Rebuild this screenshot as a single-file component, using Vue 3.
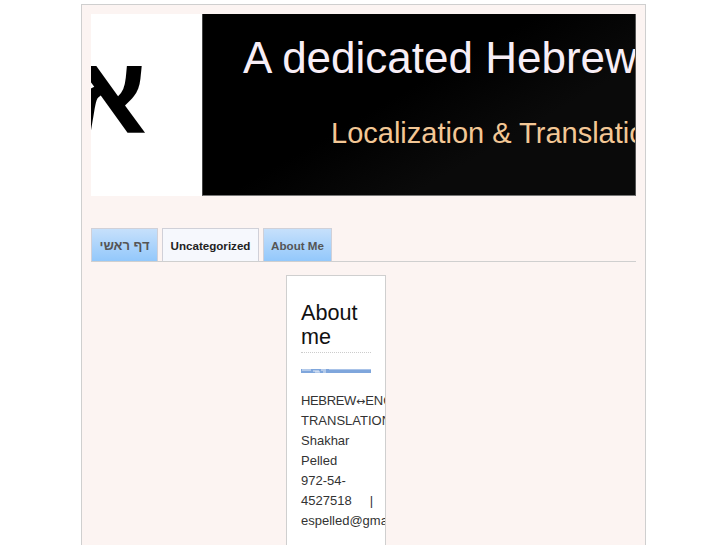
<template>
  <div class="wrap">
    <div class="banner">
      <div class="logo"><span class="alef">א</span></div>
      <div class="dark">
        <div class="head">A dedicated Hebrew Translator</div>
        <div class="sub">Localization &amp; Translation Services</div>
      </div>
    </div>
    <nav class="tabs">
      <a class="tab home" dir="rtl">דף ראשי</a>
      <a class="tab current">Uncategorized</a>
      <a class="tab about">About Me</a>
    </nav>
    <div class="content">
      <aside class="card">
        <h2>About me</h2>
        <svg class="strip" width="70" height="4" viewBox="0 0 70 4">
          <rect width="70" height="4" fill="#7fa6dc" />
          <path d="M1 1h9M12 2h6M20 1h5M14 3h5M22 3h3" stroke="#e8eef8" stroke-width="1" />
          <rect x="28" width="42" height="1" fill="#a9c3e8" />
        </svg>
        <p><span class="tight">HEBREW</span><span class="arrow">↔</span>ENGLISH</p>
        <p>TRANSLATIONS</p>
        <p>Shakhar</p>
        <p>Pelled</p>
        <p>972-54-</p>
        <p>4527518 &nbsp;&nbsp;&nbsp; |</p>
        <p>espelled@gmail.com</p>
      </aside>
    </div>
  </div>
</template>

<script setup>
</script>

<style>
html, body { margin: 0; background: #fff; overflow: hidden; }
</style>

<style scoped>
.wrap {
  box-sizing: border-box;
  width: 565px;
  height: 700px;
  margin: 4px auto 0;
  padding: 9px;
  background: #fcf4f2;
  border: 1px solid #cfcfcf;
  font-family: "Liberation Sans", Arial, sans-serif;
}
.banner {
  display: flex;
  width: 545px;
  height: 182px;
  overflow: hidden;
}
.logo {
  width: 111px;
  background: #fff;
  overflow: hidden;
  position: relative;
}
.alef {
  position: absolute;
  left: -19px;
  top: 26px;
  font: bold 110px/1 "Liberation Sans", "DejaVu Sans", sans-serif;
  color: #000;
}
.dark {
  flex: 1;
  min-width: 0;
  box-sizing: border-box;
  background: linear-gradient(150deg, #000 45%, #0a0a0a 70%);
  border-left: 1px solid #444;
  border-right: 1px solid #555;
  border-bottom: 1px solid #777;
  overflow: hidden;
  white-space: nowrap;
}
.head {
  margin: 19px 0 0 40px;
  font-size: 44px;
  line-height: 50px;
  color: #f8eef6;
}
.sub {
  margin: 34px 0 0 128px;
  font-size: 29px;
  line-height: 33px;
  color: #f3c795;
}
.tabs {
  display: flex;
  gap: 4px;
  margin-top: 32px;
  height: 34px;
  box-sizing: border-box;
  border-bottom: 1px solid #cfcfcf;
}
.tab {
  box-sizing: border-box;
  height: 34px;
  border: 1px solid #d0d0d8;
  border-bottom-color: #cfcfcf;
  font-size: 11.6px;
  font-weight: bold;
  line-height: 33px;
  text-align: center;
  color: #555;
  background: linear-gradient(#c6e0fb, #93c8fb);
}
.home { width: 67px; font-size: 13px; }
.current { width: 97px; color: #222; background: #f6f8fd; }
.about { width: 69px; }
.content { padding: 13px 0 0 195px; }
.card {
  box-sizing: border-box;
  width: 100px;
  height: 400px;
  padding: 25px 14px 0;
  background: #fff;
  border: 1px solid #cfcfcf;
  overflow: hidden;
}
.card h2 {
  margin: 0 0 16px;
  width: 70px;
  padding-bottom: 3px;
  font-size: 21.6px;
  font-weight: normal;
  line-height: 24px;
  color: #111;
  border-bottom: 1px dotted #ccc;
}
.strip { display: block; margin-bottom: 18px; }
.card p {
  margin: 0;
  height: 20px;
  font-size: 13px;
  line-height: 20px;
  color: #333;
  white-space: nowrap;
}
.tight { letter-spacing: -0.35px; }
.arrow {
  font-family: "DejaVu Sans", sans-serif;
  font-size: 11px;
  line-height: 1;
}
</style>
